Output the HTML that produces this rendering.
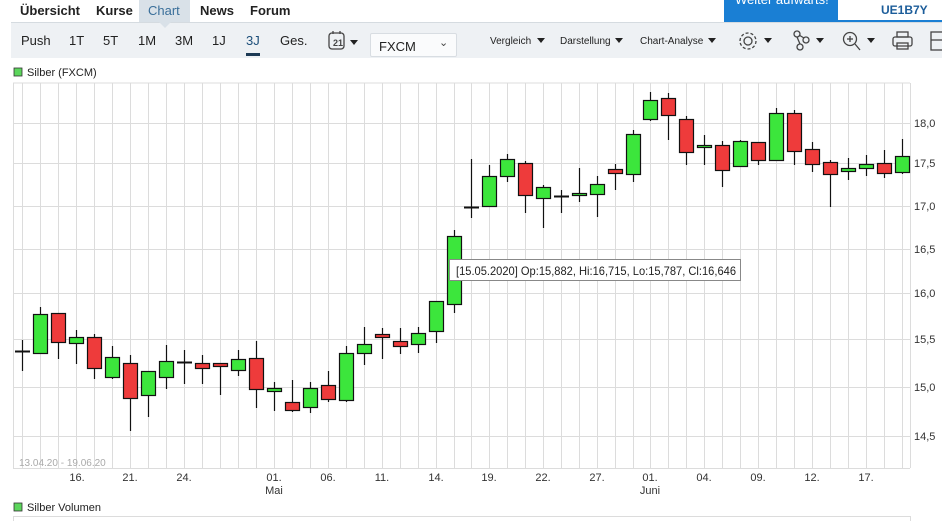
<!DOCTYPE html>
<html><head><meta charset="utf-8">
<style>
*{margin:0;padding:0;box-sizing:border-box}
body{width:942px;height:521px;overflow:hidden;background:#fff;font-family:"Liberation Sans",Arial,sans-serif;position:relative;color:#222}
.tab{position:absolute;top:3px;font-size:13px;font-weight:bold;color:#222}
.chtab{position:absolute;left:139px;top:0;width:51px;height:23px;background:#d9e1e8}
.tb{position:absolute;left:11px;top:22px;width:931px;height:36px;background:#eef1f4;border-top:1px solid #d5dbe0}
.t{position:absolute;top:33px;font-size:13px;color:#222}
.s{position:absolute;top:36px;font-size:10px;color:#222}
svg{position:absolute;left:0;top:0}
</style></head><body>
<div class="chtab"></div>
<div class="tab" style="left:20px">Übersicht</div>
<div class="tab" style="left:96px">Kurse</div>
<div class="tab" style="left:148px;color:#3a6f9a;font-weight:normal;font-size:13px">Chart</div>
<div class="tab" style="left:200px">News</div>
<div class="tab" style="left:250px">Forum</div>
<div style="position:absolute;left:724px;top:0;width:114px;height:22px;background:#1a7fd4;overflow:hidden"><div style="color:#fff;font-size:13px;position:absolute;left:11px;top:-8px">Weiter aufwärts!</div></div>
<div style="position:absolute;left:838px;top:0;width:104px;height:22px;border-bottom:2px solid #1a7fd4;background:#fff"><div style="color:#1c5d9a;font-weight:bold;font-size:12px;position:absolute;left:43px;top:3px">UE1B7Y</div></div>
<div class="tb"></div>
<div style="position:absolute;left:159px;top:22px;width:0;height:0;border-left:6px solid transparent;border-right:6px solid transparent;border-top:6px solid #d9e1e8"></div>
<div class="t" style="left:21px">Push</div>
<div class="t" style="left:69px">1T</div>
<div class="t" style="left:103px">5T</div>
<div class="t" style="left:138px">1M</div>
<div class="t" style="left:175px">3M</div>
<div class="t" style="left:212px">1J</div>
<div class="t" style="left:246px;color:#1d4f7a">3J</div>
<div style="position:absolute;left:246px;top:53px;width:14px;height:3px;background:#1d3a55"></div>
<div class="t" style="left:280px">Ges.</div>
<div style="position:absolute;left:370px;top:33px;width:87px;height:24px;background:#fafbfc;border:1px solid #d8dde2;border-radius:2px"><div style="position:absolute;left:8px;top:5px;font-size:13px">FXCM</div><div style="position:absolute;left:68px;top:2px;font-size:11px;color:#444">&#8964;</div></div>
<div class="s" style="left:490px">Vergleich</div>
<div class="s" style="left:560px">Darstellung</div>
<div class="s" style="left:640px">Chart-Analyse</div>
<svg width="942" height="521" viewBox="0 0 942 521">
<g fill="#222">
<polygon points="350,40 358,40 354,45"/>
<polygon points="537,38 545,38 541,43"/>
<polygon points="615,38 623,38 619,43"/>
<polygon points="708,38 716,38 712,43"/>
<polygon points="764,38 772,38 768,43"/>
<polygon points="816,38 824,38 820,43"/>
<polygon points="867,38 875,38 871,43"/>
</g>
<g fill="none" stroke="#444" stroke-width="1.3">
<rect x="329" y="33" width="15" height="16" rx="3"/><line x1="333" y1="31" x2="333" y2="34"/><line x1="340" y1="31" x2="340" y2="34"/>
<circle cx="748" cy="41" r="4"/><circle cx="748" cy="41" r="8" stroke-dasharray="3 2"/>
<circle cx="797" cy="34" r="3"/><circle cx="806" cy="40" r="3"/><circle cx="800" cy="47" r="3"/><line x1="797" y1="37" x2="800" y2="44"/><line x1="799" y1="35" x2="804" y2="38"/>
<circle cx="850" cy="39" r="6.5"/><line x1="855" y1="44" x2="860" y2="50"/><line x1="847" y1="39" x2="853" y2="39"/><line x1="850" y1="36" x2="850" y2="42"/>
<rect x="893" y="37" width="19" height="9" rx="2"/><rect x="897" y="32" width="11" height="5"/><rect x="897" y="43" width="11" height="6"/>
<rect x="931" y="32" width="14" height="18"/><line x1="931" y1="40" x2="945" y2="40"/>
</g>
<text x="338" y="46" font-size="9" font-weight="bold" text-anchor="middle" fill="#444" font-family="Liberation Sans">21</text>
<rect x="14" y="68" width="8" height="8" fill="#5cd65c" stroke="#333" stroke-width="0.8"/>
<text x="27" y="76" font-size="11" fill="#222" font-family="Liberation Sans">Silber (FXCM)</text>
<g stroke="#dcdcdc" stroke-width="1">
<line x1="13" y1="83" x2="910" y2="83"/>
<line x1="13" y1="123.5" x2="910" y2="123.5"/><line x1="13" y1="163.5" x2="910" y2="163.5"/><line x1="13" y1="206.5" x2="910" y2="206.5"/><line x1="13" y1="249.5" x2="910" y2="249.5"/><line x1="13" y1="293.5" x2="910" y2="293.5"/><line x1="13" y1="339.5" x2="910" y2="339.5"/><line x1="13" y1="387.5" x2="910" y2="387.5"/><line x1="13" y1="436.5" x2="910" y2="436.5"/>
<line x1="13" y1="468.5" x2="910" y2="468.5"/>
<line x1="13.5" y1="83" x2="13.5" y2="468"/><line x1="910.5" y1="83" x2="910.5" y2="468"/>
</g>
<g id="vg" stroke="#dcdcdc"></g>
<g font-size="11" fill="#333" font-family="Liberation Sans">
<text x="914" y="127">18,0</text><text x="914" y="167">17,5</text><text x="914" y="210">17,0</text><text x="914" y="253">16,5</text><text x="914" y="297">16,0</text><text x="914" y="343">15,5</text><text x="914" y="391">15,0</text><text x="914" y="440">14,5</text>
</g>
<text x="19" y="466" font-size="10" fill="#aaa" font-family="Liberation Sans">13.04.20 - 19.06.20</text>
<g font-size="11" fill="#333" text-anchor="middle" font-family="Liberation Sans">
<text x="77" y="481">16.</text><text x="130" y="481">21.</text><text x="184" y="481">24.</text><text x="274" y="481">01.</text><text x="274" y="494">Mai</text><text x="328" y="481">06.</text><text x="382" y="481">11.</text><text x="436" y="481">14.</text><text x="489" y="481">19.</text><text x="543" y="481">22.</text><text x="597" y="481">27.</text><text x="650" y="481">01.</text><text x="650" y="494">Juni</text><text x="704" y="481">04.</text><text x="758" y="481">09.</text><text x="812" y="481">12.</text><text x="866" y="481">17.</text>
</g>
<rect x="14" y="503" width="8" height="8" fill="#5cd65c" stroke="#333" stroke-width="0.8"/>
<text x="27" y="511" font-size="11" fill="#222" font-family="Liberation Sans">Silber Volumen</text>
<line x1="13" y1="516.5" x2="910" y2="516.5" stroke="#dcdcdc"/>
<line x1="13.5" y1="516" x2="13.5" y2="521" stroke="#dcdcdc"/>
<line x1="910.5" y1="516" x2="910.5" y2="521" stroke="#dcdcdc"/>
<g id="cd" stroke="#111" stroke-width="1.2"></g>
<rect x="449.5" y="259.5" width="291" height="21" fill="#fff" stroke="#888"/>
<text x="456" y="275" font-size="12" fill="#222" font-family="Liberation Sans" textLength="280" lengthAdjust="spacingAndGlyphs">[15.05.2020] Op:15,882, Hi:16,715, Lo:15,787, Cl:16,646</text>
</svg>
<script>
var d=[[22,'d',351,351,340,371],[40,'g',314,353,307,353],[58,'r',313,342,313,359],[76,'g',337,343,330,364],[94,'r',337,368,334,379],[112,'g',357,377,346,379],[130,'r',363,398,355,431],[148,'g',371,395,371,417],[166,'g',361,377,345,389],[184,'d',362,362,350,384],[202,'r',363,368,355,384],[220,'r',363,366,363,395],[238,'g',359,370,350,376],[256,'r',358,389,341,408],[274,'g',388,391,382,411],[292,'r',402,410,380,412],[310,'g',388,407,382,413],[328,'r',385,399,371,402],[346,'g',353,400,346,402],[364,'g',344,353,327,365],[382,'r',334,337,328,359],[400,'r',341,346,328,354],[418,'g',333,344,327,353],[436,'g',301,331,301,343],[454,'g',236,304,230,313],[471,'d',207,207,159,218],[489,'g',176,206,165,207],[507,'g',159,176,154,182],[525,'r',163,195,161,213],[543,'g',187,198,185,228],[561,'d',196,196,190,213],[579,'g',193,195,168,202],[597,'g',184,194,176,217],[615,'r',169,173,164,190],[633,'g',134,174,130,182],[650,'g',100,119,92,121],[668,'r',98,115,93,140],[686,'r',119,152,116,165],[704,'g',145,147,135,165],[722,'r',145,170,141,187],[740,'g',141,166,140,167],[758,'r',142,160,142,165],[776,'g',113,160,108,160],[794,'r',113,151,110,165],[812,'r',149,164,142,172],[830,'r',162,174,160,207],[848,'g',168,171,158,180],[866,'g',164,168,155,176],[884,'r',163,173,150,178],[902,'g',156,172,139,174]];
var ns='http://www.w3.org/2000/svg',vg=document.getElementById('vg'),cd=document.getElementById('cd');
function el(p,t,a){var e=document.createElementNS(ns,t);for(var k in a)e.setAttribute(k,a[k]);p.appendChild(e);}
d.forEach(function(c){var x=c[0];
el(vg,'line',{x1:x+.5,y1:83,x2:x+.5,y2:468});
el(cd,'line',{x1:x+.5,y1:c[4],x2:x+.5,y2:c[5]});
if(c[1]=='d'){el(cd,'line',{x1:x-7,y1:c[2]+.5,x2:x+8,y2:c[2]+.5,'stroke-width':2});}
else el(cd,'rect',{x:x-6.5,y:c[2]+.5,width:14,height:Math.max(c[3]-c[2],2),fill:c[1]=='g'?'#3ce63c':'#ee3b3b'});
});
</script>
</body></html>
